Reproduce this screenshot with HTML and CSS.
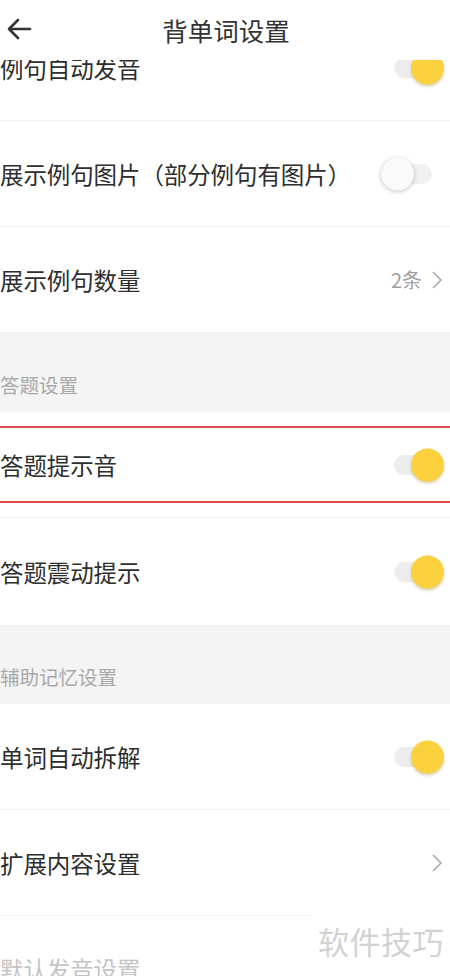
FILE: index.html
```html
<!DOCTYPE html>
<html lang="zh">
<head>
<meta charset="utf-8">
<title>背单词设置</title>
<link rel="stylesheet" href="styles.css">
</head>
<body>
<div class="screen">
  <header class="topbar">
    <svg class="back" width="26" height="24" viewBox="0 0 26 24"><path d="M24 12H3M12 3L3 12l9 9" fill="none" stroke="#333" stroke-width="2.6" stroke-linecap="round" stroke-linejoin="round"/></svg>
    <h1 class="title">背单词设置</h1>
  </header>
  <div class="viewport">
    <div class="list">
      <div class="row"><span class="label">例句自动发音</span><span class="switch on"><i></i></span></div>
      <div class="row"><span class="label">展示例句图片（部分例句有图片）</span><span class="switch off"><i></i></span></div>
      <div class="row"><span class="label">展示例句数量</span><span class="value">2条<svg class="chev" width="12" height="20" viewBox="0 0 12 20"><path d="M2 2l8 8-8 8" fill="none" stroke="#aaa" stroke-width="1.6"/></svg></span></div>
      <div class="section">答题设置</div>
      <div class="row marked"><span class="label">答题提示音</span><span class="switch on"><i></i></span><span class="mark"></span></div>
      <div class="row last"><span class="label">答题震动提示</span><span class="switch on"><i></i></span></div>
      <div class="section">辅助记忆设置</div>
      <div class="row"><span class="label">单词自动拆解</span><span class="switch on"><i></i></span></div>
      <div class="row short"><span class="label">扩展内容设置</span><span class="value"><svg class="chev" width="12" height="20" viewBox="0 0 12 20"><path d="M2 2l8 8-8 8" fill="none" stroke="#aaa" stroke-width="1.6"/></svg></span></div>
      <div class="row faint"><span class="label">默认发音设置</span></div>
    </div>
  </div>
  <div class="watermark">软件技巧</div>
</div>
</body>
</html>
```
FILE: styles.css
```css
* { box-sizing: border-box; }
html, body { margin: 0; padding: 0; background: #fff; }
body {
  font-family: "Noto Sans CJK SC", "Noto Sans", sans-serif;
  color: #333;
}
.screen {
  width: 450px;
  height: 976px;
  overflow: hidden;
  position: relative;
  background: #fff;
}
.topbar {
  height: 60px;
  position: relative;
  z-index: 2;
  background: #fff;
  display: flex;
  align-items: center;
  justify-content: center;
}
.back {
  position: absolute;
  left: 6px;
  top: 17px;
}
.title {
  margin: 0;
  font-size: 25.5px;
  font-weight: 400;
  color: #333;
  line-height: 30px;
  padding-left: 2px;
}
.viewport {
  height: 916px;
  overflow: hidden;
}
.list {
  margin-top: -45px;
}
.row {
  height: 106px;
  display: flex;
  align-items: center;
  justify-content: space-between;
  border-bottom: 1px solid #f2f2f2;
  position: relative;
  padding-left: 0;
  padding-right: 6px;
}
.row.last { border-bottom: none; height: 107px; }
.row.short { border-bottom: none; }
.row.short::after {
  content: "";
  position: absolute;
  left: 0;
  bottom: 0;
  width: 312px;
  border-bottom: 1px solid #f2f2f2;
}
.label {
  font-size: 23.5px;
  line-height: 30px;
  color: #2e2e2e;
  letter-spacing: -0.1px;
}
.row.faint { align-items: flex-start; padding-top: 38px; }
.row.faint .label { color: #c4c4c4; }
.value {
  display: flex;
  align-items: center;
  gap: 9px;
  font-size: 20px;
  color: #a0a0a0;
  padding-right: 1px;
}
.section {
  height: 79px;
  background: #f4f4f4;
  display: flex;
  align-items: flex-end;
  padding-bottom: 15px;
  font-size: 19.5px;
  line-height: 24px;
  color: #a8a8a8;
}
.switch {
  position: relative;
  width: 44px;
  height: 20px;
  border-radius: 10px;
  background: #ededed;
  margin-right: 6px;
  flex-shrink: 0;
}
.switch i {
  position: absolute;
  top: 50%;
  width: 33px;
  height: 33px;
  border-radius: 50%;
  transform: translateY(-50%);
}
.switch.on i {
  right: -6px;
  background: #fcd13e;
  box-shadow: 0 2px 3px rgba(150, 120, 20, 0.35);
}
.switch.off {
  background: #f1f1f1;
  margin-right: 12px;
}
.switch.off i {
  left: -7px;
  background: #fafafa;
  box-shadow: 0 1px 4px rgba(0, 0, 0, 0.25);
}
.mark {
  position: absolute;
  left: -4px;
  right: -4px;
  top: 14px;
  bottom: 14px;
  border: 2px solid #dc4a4f;
  pointer-events: none;
}
.watermark {
  position: absolute;
  right: 6px;
  top: 921px;
  font-size: 31px;
  line-height: 40px;
  color: #d2d2d2;
  letter-spacing: 0.5px;
  background: #fff;
  padding-left: 8px;
}
```
